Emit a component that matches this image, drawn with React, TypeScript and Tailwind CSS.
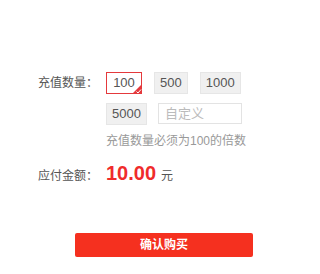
const font = { fontFamily: '"Liberation Sans", Arial, "Noto Sans CJK SC", sans-serif' };

function Chip({ label, selected }: { label: string; selected?: boolean }) {
  return (
    <div
      className={`relative flex h-[22px] items-center justify-center border px-[5px] text-[13px] text-[#555] ${
        selected ? "min-w-[36px] border-[#e4393c] bg-white" : "border-[#e6e6e6] bg-[#f0f0f0]"
      }`}
    >
      {label}
      {selected && (
        <svg className="absolute -bottom-px -right-px" width="10" height="10" viewBox="0 0 10 10">
          <polygon points="10,0 10,10 0,10" fill="#e4393c" />
          <polyline points="4.5,7.5 6,9 9,5.5" fill="none" stroke="#fff" strokeWidth="1" />
        </svg>
      )}
    </div>
  );
}

export default function App() {
  return (
    <div className="h-[274px] w-[297px] bg-white pt-[72px]" style={font}>
      <div className="flex">
        <div className="w-[106px] shrink-0 pl-[38px] text-[12px] leading-[22px] text-[#555]">
          <span className="whitespace-nowrap">充值数量：</span>
        </div>
        <div className="flex flex-col gap-[9px]">
          <div className="flex gap-[12px]">
            <Chip label="100" selected />
            <Chip label="500" />
            <Chip label="1000" />
          </div>
          <div className="flex gap-[11px]">
            <Chip label="5000" />
            <input
              placeholder="自定义"
              className="h-[21px] w-[84px] border border-[#e3e3e3] bg-white px-[6px] text-[13px] text-[#555] outline-none placeholder:text-[#bbb]"
            />
          </div>
          <p className="-mt-[1px] text-[12px] leading-[16px] text-[#999]">充值数量必须为100的倍数</p>
        </div>
      </div>
      <div className="mt-[12px] flex items-baseline">
        <div className="w-[106px] shrink-0 pl-[38px] text-[12px] text-[#555]">
          <span className="whitespace-nowrap">应付金额：</span>
        </div>
        <span className="text-[20px] font-bold leading-[24px] text-[#f02b2b]">10.00</span>
        <span className="ml-[5px] text-[12px] text-[#555]">元</span>
      </div>
      <div className="mt-[48px] flex pl-[75px]">
        <button className="h-[24px] w-[178px] rounded-[2px] bg-[#f5301f] text-[12px] font-bold text-white">
          确认购买
        </button>
      </div>
    </div>
  );
}
